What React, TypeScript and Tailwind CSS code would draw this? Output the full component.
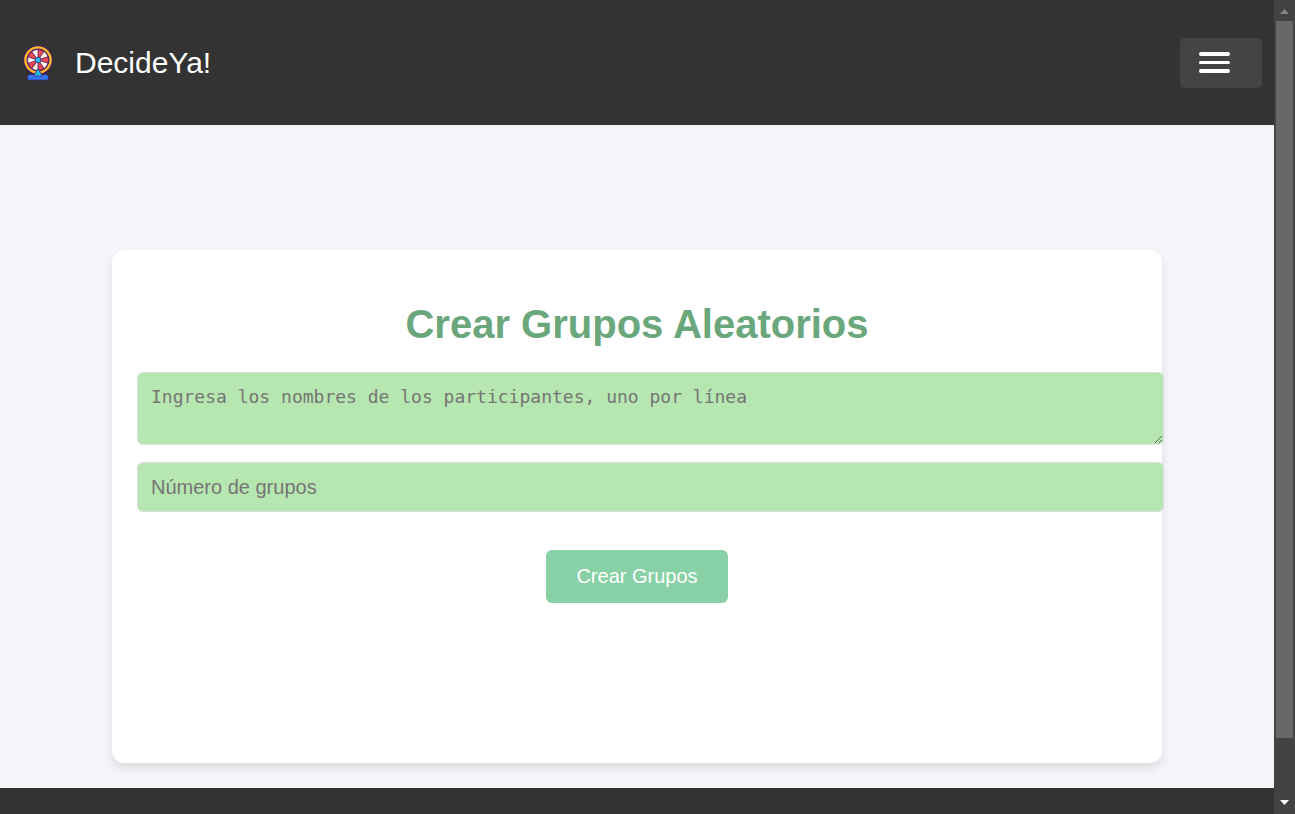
import React from "react";

const RIM_CENTER = { x: 15, y: 15 };
const SEGMENTS = Array.from({ length: 10 }, (_, i) => i);

function point(angle: number, radius: number) {
  const rad = (angle * Math.PI) / 180;
  return `${(RIM_CENTER.x + radius * Math.cos(rad)).toFixed(2)} ${(RIM_CENTER.y + radius * Math.sin(rad)).toFixed(2)}`;
}

function WheelLogo() {
  return (
    <svg viewBox="0 0 30 36" className="h-9 w-[30px]" aria-hidden="true">
      <circle cx="15" cy="15" r="14.700" fill="#4a1a6b" />
      <circle cx="15" cy="15" r="12.600" fill="#4a1a6b" stroke="#fdb924" strokeWidth="2.400" />
      {SEGMENTS.map((i) => {
        const start = i * 36 - 90;
        return (
          <path
            key={i}
            d={`M15 15L${point(start, 10.4)}A10.400 10.400 0 0 1 ${point(start + 36, 10.4)}Z`}
            fill={i % 2 === 0 ? "#f04a50" : "#fff3e6"}
            stroke="#4a1a6b"
            strokeWidth="0.600"
          />
        );
      })}
      <circle cx="15" cy="15" r="3" fill="#2cb5e8" stroke="#4a1a6b" strokeWidth="0.800" />
      <path d="M6.500 29.500h17l2 2v3.500h-21v-3.500z" fill="#2f78f2" stroke="#4a1a6b" strokeWidth="0.700" strokeLinejoin="round" />
      <path d="M15 23.500l4.500 7.500h-9z" fill="#22b8e6" stroke="#4a1a6b" strokeWidth="0.700" />
    </svg>
  );
}

function Header() {
  return (
    <header className="flex h-[125px] shrink-0 items-center justify-between bg-[#333333] pl-[23px] pr-3">
      <a href="#inicio" className="flex items-center gap-[22px] text-[30px] leading-9 text-white">
        <WheelLogo />
        <span>DecideYa!</span>
      </a>
      <button
        type="button"
        aria-label="Abrir menú"
        className="flex h-[50px] w-[82px] flex-col justify-center gap-[5px] rounded-[5px] bg-[#444444] pl-[19px]"
      >
        <span className="h-1 w-[31px] rounded-[2px] bg-white" />
        <span className="h-[3px] w-[31px] rounded-[2px] bg-white" />
        <span className="h-1 w-[31px] rounded-[2px] bg-white" />
      </button>
    </header>
  );
}

function GroupForm() {
  return (
    <form
      onSubmit={(event) => event.preventDefault()}
      className="mx-auto min-h-[513px] w-full max-w-[1050px] rounded-xl bg-white px-[25px] pt-[50px] shadow-[0_5px_10px_rgba(0,0,0,0.1)]"
    >
      <h1 className="text-center text-[40px] font-bold leading-[48px] text-[#6ba77c]">Crear Grupos Aleatorios</h1>
      <textarea
        rows={2}
        aria-label="Nombres de los participantes"
        placeholder="Ingresa los nombres de los participantes, uno por línea"
        className="mt-6 box-content block w-full rounded-md border border-[#dddddd] bg-[#b7e7b0] pb-[11px] pl-[13px] pr-3 pt-3 font-['DejaVu_Sans_Mono',monospace] text-[18px] leading-6 text-[#333333] placeholder:text-[#757575]"
      />
      <input
        type="text"
        inputMode="numeric"
        aria-label="Número de grupos"
        placeholder="Número de grupos"
        className="mt-[17px] box-content block h-6 w-full rounded-md border border-[#dddddd] bg-[#b7e7b0] py-3 pl-[13px] pr-3 text-[20px] leading-6 text-[#333333] placeholder:text-[#757575]"
      />
      <button
        type="submit"
        className="mx-auto mt-[38px] block rounded-md bg-[#88d0a5] px-[30px] pb-[15px] pt-[14px] text-[20px] leading-6 text-white"
      >
        Crear Grupos
      </button>
    </form>
  );
}

function ScrollRail() {
  return (
    <div aria-hidden="true" className="flex w-[21px] shrink-0 flex-col bg-[#424242] px-0.5">
      <div className="flex h-[21px] shrink-0 items-center justify-center">
        <svg viewBox="0 0 9 5" className="mt-0.5 h-[5px] w-[9px]">
          <path d="M0 5L4.500 0L9 5z" fill="#868686" />
        </svg>
      </div>
      <div className="flex-1 bg-[#686868]" />
      <div className="flex h-[76px] shrink-0 items-end justify-center pb-[9px]">
        <svg viewBox="0 0 9 5" className="h-[5px] w-[9px]">
          <path d="M0 0h9L4.500 5z" fill="#ffffff" />
        </svg>
      </div>
    </div>
  );
}

export default function App() {
  return (
    <div className="flex h-screen overflow-hidden font-['Liberation_Sans',Arial,sans-serif]">
      <div className="flex min-w-0 flex-1 flex-col bg-[#f4f4f9]">
        <Header />
        <main className="shrink-0 px-6 pb-[25px] pt-[125px]">
          <GroupForm />
        </main>
        <footer className="flex-1 bg-[#333333]" />
      </div>
      <ScrollRail />
    </div>
  );
}
